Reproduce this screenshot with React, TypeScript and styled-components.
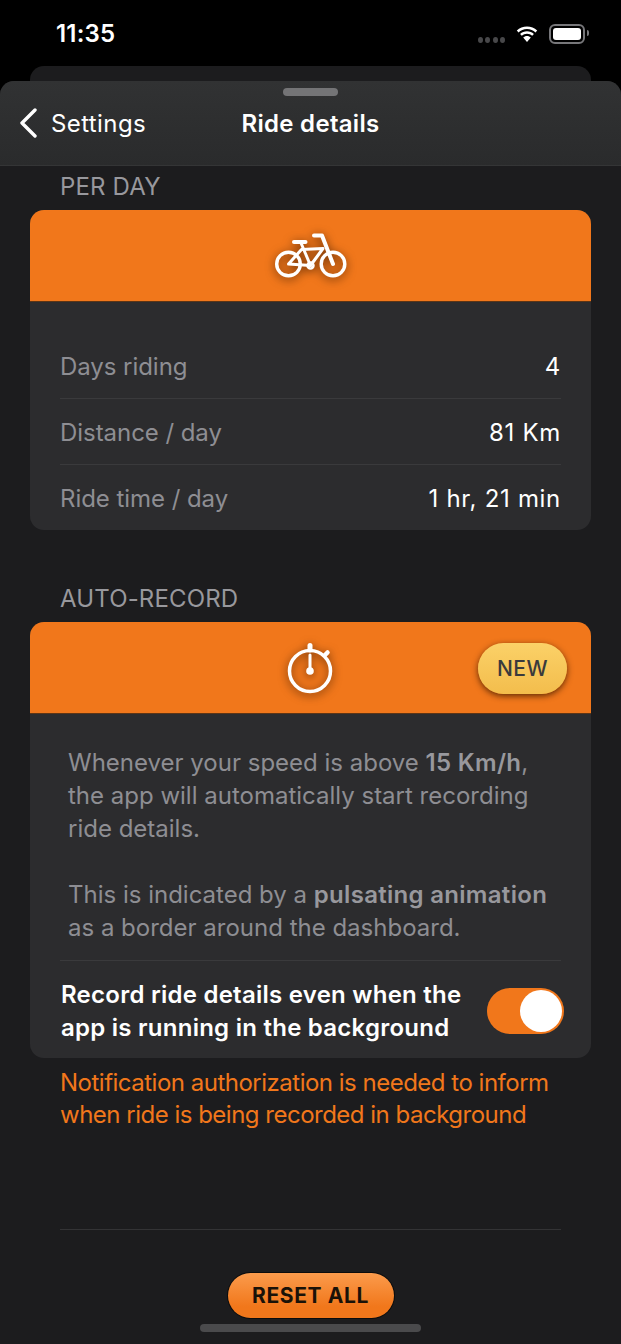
import React from 'react';
import styled, { createGlobalStyle } from 'styled-components';

const orange = '#f1771b';

const GlobalStyle = createGlobalStyle`
  html, body {
    margin: 0;
    padding: 0;
    background: #000;
  }
  body {
    font-family: Inter, "Liberation Sans", sans-serif;
    -webkit-font-smoothing: antialiased;
  }
`;

const Screen = styled.div`
  position: relative;
  display: flex;
  flex-direction: column;
  width: 621px;
  height: 1344px;
  overflow: hidden;
  background: #000;
`;

const StatusBar = styled.div`
  display: flex;
  align-items: center;
  justify-content: space-between;
  height: 66px;
  padding: 0 36px 0 56px;
  box-sizing: border-box;
  flex-shrink: 0;
`;

const Clock = styled.div`
  color: #fff;
  font-size: 24px;
  font-weight: 600;
  letter-spacing: 0.2px;
  margin-top: 1px;
`;

const StatusIcons = styled.div`
  display: flex;
  align-items: center;
  gap: 10px;
  margin-top: 2px;
`;

const SignalDots = styled.div`
  display: flex;
  gap: 2.5px;
  margin-top: 11px;
`;

const SignalDot = styled.span`
  width: 5px;
  height: 6px;
  border-radius: 50%;
  background: #48484a;
`;

const Battery = styled.div`
  position: relative;
  width: 28px;
  height: 12px;
  border: 2px solid #77777a;
  border-radius: 6px;
  padding: 2px;
  box-sizing: content-box;
  &::after {
    content: '';
    position: absolute;
    right: -6px;
    top: 4px;
    width: 2px;
    height: 6px;
    border-radius: 0 2px 2px 0;
    background: #77777a;
  }
`;

const BatteryFill = styled.div`
  width: 100%;
  height: 100%;
  background: #fff;
  border-radius: 3px;
`;

const BehindCard = styled.div`
  height: 15px;
  margin: 0 30px;
  flex-shrink: 0;
  background: #1c1c1e;
  border-radius: 14px 14px 0 0;
`;

const Sheet = styled.div`
  display: flex;
  flex: 1;
  flex-direction: column;
  background: #1c1c1e;
  border-radius: 14px 14px 0 0;
  overflow: hidden;
`;

const NavHeader = styled.header`
  display: flex;
  flex-direction: column;
  align-items: center;
  height: 85px;
  box-sizing: border-box;
  flex-shrink: 0;
  background: linear-gradient(180deg, #313233 0%, #2a2b2c 100%);
  border-bottom: 1px solid #343536;
`;

const Grabber = styled.div`
  width: 55px;
  height: 8px;
  margin-top: 7px;
  border-radius: 4px;
  background: #747476;
`;

const NavRow = styled.div`
  position: relative;
  display: flex;
  align-items: center;
  justify-content: center;
  align-self: stretch;
  height: 40px;
  margin-top: 7px;
`;

const BackButton = styled.div`
  position: absolute;
  left: 19px;
  top: 0;
  display: flex;
  align-items: center;
  gap: 13px;
  height: 40px;
  color: #fff;
  font-size: 24px;
  letter-spacing: 0.4px;
`;

const NavTitle = styled.div`
  color: #fff;
  font-size: 24px;
  font-weight: 600;
  letter-spacing: 0.3px;
`;

const Content = styled.main`
  display: flex;
  flex-direction: column;
`;

const SectionLabel = styled.div<{ $top: number }>`
  margin: ${(p) => p.$top}px 0 7px 60px;
  height: 34px;
  line-height: 36px;
  color: #98989d;
  font-size: 24px;
  font-weight: 400;
  letter-spacing: 0.15px;
`;

const Card = styled.section`
  margin: 0 30px;
  border-radius: 14px;
  overflow: hidden;
  background: #2c2c2e;
`;

const CardBanner = styled.div`
  position: relative;
  display: flex;
  align-items: center;
  justify-content: center;
  height: 92px;
  background: ${orange};
  box-shadow: inset 0 -1px 0 #5c3516;
`;

const BannerIcon = styled.svg`
  filter: drop-shadow(0 2px 5px rgba(60, 25, 0, 0.8));
`;

const NewBadge = styled.div`
  position: absolute;
  right: 24px;
  top: 21px;
  display: flex;
  align-items: center;
  justify-content: center;
  width: 89px;
  height: 51px;
  border-radius: 26px;
  background: linear-gradient(180deg, #fbd168 0%, #f3bd4c 100%);
  box-shadow: 0 2px 6px rgba(70, 30, 0, 0.85);
  color: #3a3a3c;
  font-size: 21px;
  font-weight: 500;
  letter-spacing: 0.5px;
`;

const StatList = styled.div`
  padding: 31px 30px 0;
`;

const StatRow = styled.div<{ $last?: boolean }>`
  display: flex;
  align-items: center;
  justify-content: space-between;
  height: ${(p) => (p.$last ? 65 : 66)}px;
  padding-top: 2px;
  box-sizing: border-box;
  border-bottom: ${(p) => (p.$last ? 'none' : '1px solid #3a3a3c')};
`;

const StatLabel = styled.span`
  color: #8e8e93;
  font-size: 24px;
  font-weight: 400;
  letter-spacing: -0.05px;
`;

const StatValue = styled.span`
  color: #fff;
  font-size: 24px;
  font-weight: 400;
  letter-spacing: 0.7px;
`;

const Description = styled.div`
  padding: 32px 31px 0 38px;
`;

const Paragraph = styled.p`
  margin: 0 0 33px;
  color: #8e8e93;
  font-size: 24px;
  font-weight: 400;
  line-height: 33px;
  letter-spacing: 0;
  &:last-child {
    margin-bottom: 0;
  }
  strong {
    font-weight: 600;
    color: #98989d;
    letter-spacing: 0.3px;
  }
`;

const ToggleRow = styled.div`
  display: flex;
  align-items: center;
  justify-content: space-between;
  margin: 16px 30px 0;
  padding-top: 2px;
  height: 98px;
  box-sizing: border-box;
  border-top: 1px solid #3a3a3c;
`;

const ToggleLabel = styled.div`
  margin-left: 1px;
  color: #fff;
  font-size: 24px;
  font-weight: 600;
  line-height: 33px;
  letter-spacing: 0.25px;
`;

const Switch = styled.div`
  display: flex;
  justify-content: flex-end;
  align-items: center;
  flex-shrink: 0;
  width: 77px;
  height: 46px;
  margin-right: -3px;
  padding: 0 2px;
  box-sizing: border-box;
  border-radius: 23px;
  background: ${orange};
`;

const SwitchKnob = styled.div`
  width: 42px;
  height: 42px;
  border-radius: 50%;
  background: #fff;
`;

const Warning = styled.p`
  margin: 9px 0 0 60px;
  color: ${orange};
  font-size: 24px;
  font-weight: 400;
  line-height: 32px;
  letter-spacing: -0.5px;
`;

const Footer = styled.div`
  display: flex;
  flex-direction: column;
  align-items: center;
  margin: 98px 60px 0;
  padding-top: 43px;
  border-top: 1px solid #333335;
`;

const ResetButton = styled.button`
  width: 166px;
  height: 45px;
  padding: 0;
  border: none;
  border-radius: 23px;
  background: linear-gradient(180deg, #fb9b4c 0%, #f1771b 75%);
  box-shadow: 0 0 0 1px #0c0c0c;
  color: #1a1208;
  font-family: inherit;
  font-size: 21px;
  font-weight: 700;
  letter-spacing: 0.6px;
`;

const HomeIndicator = styled.div`
  position: absolute;
  left: 200px;
  bottom: 12px;
  width: 221px;
  height: 8px;
  border-radius: 4px;
  background: #4a4a4c;
`;

const BikeIcon = () => (
  <BannerIcon width="74" height="48" viewBox="0 0 74 48" fill="none" stroke="#fff" strokeLinecap="round" strokeLinejoin="round">
    <circle cx="14.500" cy="32" r="11.800" strokeWidth="3.400" />
    <circle cx="59" cy="32" r="11.800" strokeWidth="3.400" />
    <path d="M14.500 32 L27.500 17.500 L49 16.500 L36.500 33.500 Z" strokeWidth="3" />
    <path d="M27 11 L36.500 33.500" strokeWidth="3" />
    <path d="M20 10 H31.500" strokeWidth="4" />
    <path d="M40 3.500 H48 L59 32" strokeWidth="4" />
    <circle cx="36.500" cy="33.500" r="3" strokeWidth="2.500" />
  </BannerIcon>
);

const StopwatchIcon = () => (
  <BannerIcon width="50" height="54" viewBox="0 0 50 54" fill="none" stroke="#fff" strokeLinecap="round">
    <circle cx="24" cy="30" r="20.500" strokeWidth="3.500" />
    <path d="M24 4.500 V9" strokeWidth="5" />
    <path d="M41.500 11.500 L39 14" strokeWidth="4.500" />
    <path d="M24 14 V30" strokeWidth="3" />
    <circle cx="24" cy="30" r="3.800" fill="#fff" stroke="none" />
  </BannerIcon>
);

const WifiIcon = () => (
  <svg width="24" height="19" viewBox="0 0 24 18" fill="#fff">
    <path d="M12 3.600c3.300 0 6.300 1.300 8.500 3.400l1.700-1.900C19.500 2.500 15.900 1 12 1S4.500 2.500 1.800 5.100L3.500 7C5.700 4.900 8.700 3.600 12 3.600z" />
    <path d="M12 8.300c2 0 3.800.8 5.200 2l1.700-1.900C17.100 6.700 14.700 5.700 12 5.700s-5.100 1-6.900 2.700l1.700 1.900c1.400-1.200 3.200-2 5.200-2z" />
    <path d="M12 10.400c-1.500 0-2.800.6-3.800 1.500L12 16.500l3.800-4.600c-1-.9-2.300-1.500-3.800-1.500z" />
  </svg>
);

const stats = [
  { label: 'Days riding', value: '4' },
  { label: 'Distance / day', value: '81 Km' },
  { label: 'Ride time / day', value: '1 hr, 21 min' },
];

export default function App() {
  return (
    <Screen>
      <GlobalStyle />
      <StatusBar>
        <Clock>11:35</Clock>
        <StatusIcons>
          <SignalDots>
            {[0, 1, 2, 3].map((i) => (
              <SignalDot key={i} />
            ))}
          </SignalDots>
          <WifiIcon />
          <Battery>
            <BatteryFill />
          </Battery>
        </StatusIcons>
      </StatusBar>
      <BehindCard />
      <Sheet>
        <NavHeader>
          <Grabber />
          <NavRow>
            <BackButton>
              <svg width="19" height="30" viewBox="0 0 19 30" fill="none" stroke="#fff" strokeWidth="3.400" strokeLinecap="round" strokeLinejoin="round">
                <path d="M16 2 L3 15 L16 28" />
              </svg>
              Settings
            </BackButton>
            <NavTitle>Ride details</NavTitle>
          </NavRow>
        </NavHeader>
        <Content>
          <SectionLabel $top={3}>PER DAY</SectionLabel>
          <Card>
            <CardBanner>
              <BikeIcon />
            </CardBanner>
            <StatList>
              {stats.map((s, i) => (
                <StatRow key={s.label} $last={i === stats.length - 1}>
                  <StatLabel>{s.label}</StatLabel>
                  <StatValue>{s.value}</StatValue>
                </StatRow>
              ))}
            </StatList>
          </Card>
          <SectionLabel $top={51}>AUTO-RECORD</SectionLabel>
          <Card>
            <CardBanner>
              <StopwatchIcon />
              <NewBadge>NEW</NewBadge>
            </CardBanner>
            <Description>
              <Paragraph>
                Whenever your speed is above <strong>15 Km/h</strong>, the app will automatically start recording ride details.
              </Paragraph>
              <Paragraph>
                This is indicated by a <strong>pulsating animation</strong> as a border around the dashboard.
              </Paragraph>
            </Description>
            <ToggleRow>
              <ToggleLabel>
                Record ride details even when the
                <br />
                app is running in the background
              </ToggleLabel>
              <Switch>
                <SwitchKnob />
              </Switch>
            </ToggleRow>
          </Card>
          <Warning>
            Notification authorization is needed to inform
            <br />
            when ride is being recorded in background
          </Warning>
          <Footer>
            <ResetButton>RESET ALL</ResetButton>
          </Footer>
        </Content>
      </Sheet>
      <HomeIndicator />
    </Screen>
  );
}
